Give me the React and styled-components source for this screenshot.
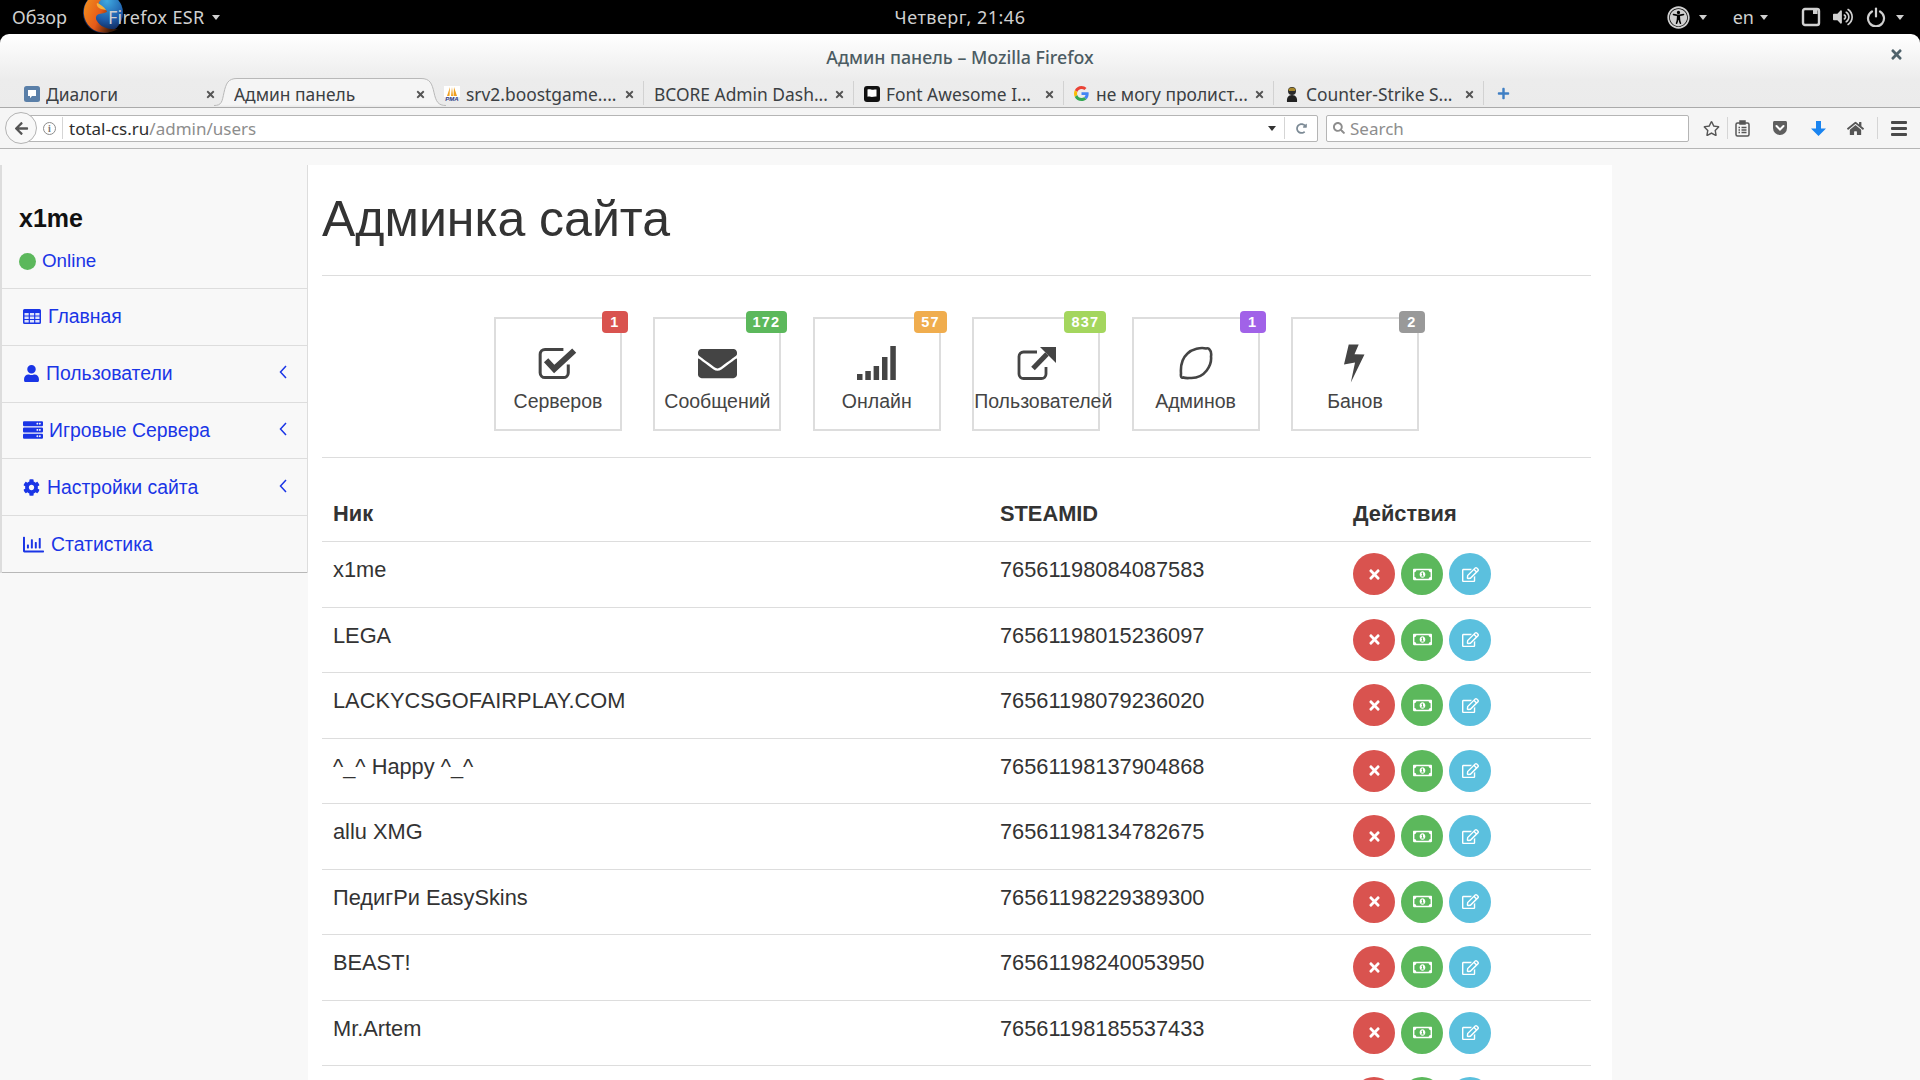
import React from 'react';
import styled, { createGlobalStyle } from 'styled-components';
import {
  FaCog, FaEnvelope, FaHome, FaRegChartBar, FaRegEdit,
  FaRegMoneyBillAlt, FaRegStar, FaServer, FaTimes, FaUniversalAccess, FaUser,
  FaVolumeUp, FaSearch, FaArrowLeft, FaRedoAlt, FaPlus,
} from 'react-icons/fa';

const uiFont = '"Noto Sans", "Open Sans", sans-serif';

const Global = createGlobalStyle`
  html, body {
    margin: 0;
    height: 1080px;
    overflow: hidden;
    background: #f8f8f8;
    font-family: "Liberation Sans", Arial, sans-serif;
  }
`;

const Page = styled.div`
  width: 1920px;
  height: 1080px;
  overflow: hidden;
  background: #000;
`;

/* gnome panel */
const TopBar = styled.div`
  height: 34px;
  display: grid;
  grid-template-columns: 1fr auto 1fr;
  align-items: center;
  background: #000;
  color: #d0d0d0;
  font-family: ${uiFont};
  font-size: 18px;
`;

const TopLeft = styled.div`
  display: flex;
  align-items: center;
  height: 34px;
  padding-left: 12px;
`;

const AppName = styled.span`
  margin-left: -18px;
  letter-spacing: 0.3px;
`;

const Clock = styled.span`
  letter-spacing: 0.5px;
`;

const TopRight = styled.div`
  display: flex;
  align-items: center;
  justify-content: flex-end;
  padding-right: 16px;
`;

const Caret = styled.i`
  display: inline-block;
  width: 0;
  height: 0;
  margin-left: ${(p) => p.$left ?? 7}px;
  border-left: 4.5px solid transparent;
  border-right: 4.5px solid transparent;
  border-top: 5px solid ${(p) => p.$color || '#d0d0d0'};
`;

const TrayItem = styled.span`
  display: inline-flex;
  align-items: center;
  margin-left: ${(p) => p.$left || 0}px;
  color: #d0d0d0;
`;

/* firefox window */
const Chrome = styled.div`
  background: linear-gradient(#fff, #ececec 62%, #ebebeb);
  border-radius: 9px 9px 0 0;
`;

const TitleBar = styled.div`
  height: 45px;
  display: flex;
  align-items: center;
  justify-content: center;
  position: relative;
  color: #4c5c63;
  font-family: ${uiFont};
  font-size: 17.8px;
  font-weight: 500;
`;

const WindowClose = styled.span`
  position: absolute;
  right: 16px;
  top: 13px;
  color: #4f626b;
  display: flex;
`;

const TabStrip = styled.div`
  height: 28px;
  display: flex;
  padding-left: 14px;
  border-bottom: 1px solid #aaa;
`;

const Tab = styled.div`
  position: relative;
  width: 210px;
  box-sizing: border-box;
  display: flex;
  align-items: center;
  padding: 2px 8px 0 10px;
  color: #3b4043;
  font-family: ${uiFont};
  font-size: 17.4px;
  white-space: nowrap;
  border-right: ${(p) => (p.$divider ? '1px solid #d2d2d2' : '0')};
  height: 24px;
  margin-top: 2px;
`;

const TabShape = styled.svg`
  position: absolute;
  left: -10px;
  top: -3px;
`;

const TabIcon = styled.span`
  position: relative;
  display: flex;
  width: 16px;
  height: 16px;
  margin-right: 6px;
  flex: none;
`;

const TabLabel = styled.span`
  position: relative;
  flex: 1;
  overflow: hidden;
`;

const TabClose = styled.span`
  position: relative;
  display: flex;
  color: #555;
  margin-left: 6px;
`;

const NewTab = styled.span`
  display: flex;
  align-items: center;
  margin-left: 13px;
  color: #3f7fc4;
`;

const NavBar = styled.div`
  height: 41px;
  box-sizing: border-box;
  display: flex;
  align-items: center;
  padding-left: 5px;
  background: #f5f5f5;
  border-bottom: 1px solid #b5b5b5;
`;

const BackButton = styled.div`
  width: 30px;
  height: 30px;
  flex: none;
  display: flex;
  align-items: center;
  justify-content: center;
  position: relative;
  z-index: 1;
  margin-right: -15px;
  border: 1px solid #b3b3b3;
  border-radius: 50%;
  background: #f8f8f8;
  color: #555;
`;

const UrlBox = styled.div`
  width: ${(p) => p.$width}px;
  height: 27px;
  flex: none;
  box-sizing: border-box;
  display: flex;
  align-items: center;
  margin-right: ${(p) => p.$right || 0}px;
  padding-left: ${(p) => p.$pad}px;
  background: #fff;
  border: 1px solid #b5b5b5;
  border-radius: 2px;
  font-family: ${uiFont};
  font-size: 17px;
  color: #2d2d2d;
`;

const InfoDot = styled.span`
  width: 13px;
  height: 13px;
  box-sizing: border-box;
  flex: none;
  display: flex;
  align-items: center;
  justify-content: center;
  border: 1px solid #8c8c8c;
  border-radius: 50%;
  color: #777;
  font: 700 10px "Liberation Serif", serif;
`;

const VSep = styled.span`
  width: 1px;
  height: ${(p) => p.$height || 22}px;
  flex: none;
  margin: 0 ${(p) => p.$right || 0}px 0 ${(p) => p.$left || 0}px;
  background: #d5d5d5;
`;

const Muted = styled.span`
  color: #8d8d8d;
  margin-left: ${(p) => p.$left || 0}px;
`;

const UrlActions = styled.span`
  display: flex;
  align-items: center;
  margin-left: auto;
  padding-right: 10px;
`;

const ToolSlot = styled.span`
  width: ${(p) => p.$width}px;
  margin-left: ${(p) => p.$left || 0}px;
  flex: none;
  display: flex;
  justify-content: center;
  color: ${(p) => p.$color || '#555'};
`;

const Burger = styled.span`
  display: block;
  width: 16px;
  height: 3px;
  border-radius: 1px;
  background: #4a4a4a;
  box-shadow: 0 6px 0 #4a4a4a, 0 -6px 0 #4a4a4a;
`;

/* page content */
const Shell = styled.div`
  height: 932px;
  display: flex;
  align-items: flex-start;
  padding-top: 16px;
  box-sizing: border-box;
  background: #f8f8f8;
`;

const Sidebar = styled.nav`
  width: 308px;
  flex: none;
  box-sizing: border-box;
  background: #f8f8f8;
  border-left: 2px solid #ddd;
  border-right: 1px solid #ddd;
`;

const SideHead = styled.div`
  height: 124px;
  box-sizing: border-box;
  padding: 35px 0 0 17px;
  border-bottom: 1px solid #ddd;
`;

const UserName = styled.div`
  font-size: 25px;
  line-height: 36px;
  font-weight: 700;
  color: #111;
`;

const Status = styled.div`
  display: flex;
  align-items: center;
  gap: 6px;
  margin-top: 13px;
  font-size: 18.8px;
  line-height: 24px;
  color: #1a35e6;
`;

const Dot = styled.span`
  width: 17px;
  height: 17px;
  border-radius: 50%;
  background: #5cb85c;
`;

const SideItem = styled.a`
  height: 56.8px;
  box-sizing: border-box;
  display: flex;
  align-items: center;
  gap: ${(p) => p.$gap || 8}px;
  padding: 0 20px 0 21px;
  border-bottom: 1px solid ${(p) => (p.$last ? '#b8b8b8' : '#ddd')};
  font-size: 19.4px;
  color: #1a35e6;
`;

const ChevronMark = styled.svg`
  margin-left: auto;
  margin-top: -3px;
`;

const Panel = styled.main`
  width: 1304px;
  height: 916px;
  flex: none;
  box-sizing: border-box;
  overflow: hidden;
  padding: 0 21px 0 14px;
  background: #fff;
  color: #333;
`;

const Heading = styled.h1`
  height: 111px;
  box-sizing: border-box;
  margin: 0;
  padding-top: 24px;
  border-bottom: 1px solid #ddd;
  font-size: 50px;
  line-height: 60px;
  font-weight: 400;
  color: #333;
`;

const Stats = styled.div`
  display: flex;
  gap: 31.4px;
  padding: 41px 0 26px 172px;
  border-bottom: 1px solid #ddd;
`;

const StatCard = styled.div`
  position: relative;
  width: 128px;
  height: 114px;
  box-sizing: border-box;
  padding-top: 25px;
  border: 2px solid #ddd;
  color: #444;
  font-size: 19.5px;
  text-align: center;
`;

const StatIcon = styled.div`
  height: 38px;
  display: flex;
  align-items: center;
  justify-content: center;
`;

const StatLabel = styled.div`
  margin-top: 6px;
  line-height: 26px;
  white-space: nowrap;
`;

const Badge = styled.span`
  position: absolute;
  top: -8px;
  right: -8px;
  height: 22px;
  min-width: 26px;
  box-sizing: border-box;
  padding: 0 7px;
  border-radius: 4px;
  background: ${(p) => p.$color};
  color: #fff;
  font-size: 14.5px;
  font-weight: 700;
  line-height: 22px;
  letter-spacing: 1.2px;
`;

const Row = styled.div`
  display: grid;
  grid-template-columns: 668px 353px 1fr;
  height: ${(p) => (p.$head ? 84 : 65.55)}px;
  box-sizing: border-box;
  align-items: ${(p) => (p.$head ? 'end' : 'start')};
  border-bottom: 1px solid #ddd;
  font-size: 21.8px;
  line-height: 30px;
  font-weight: ${(p) => (p.$head ? 700 : 400)};
  color: #333;
`;

const Cell = styled.div`
  padding: ${(p) => (p.$head ? '0 10px 12px' : '13px 10px 0')};
  padding-left: ${(p) => (p.$nick ? 11 : 10)}px;
`;

const Actions = styled.div`
  display: flex;
  gap: 6px;
  padding: 11px 0 0 10px;
`;

const RoundButton = styled.span`
  width: 42px;
  height: 42px;
  display: flex;
  align-items: center;
  justify-content: center;
  border-radius: 50%;
  background: ${(p) => p.$color};
  color: #fff;
`;

const PmaWord = styled.span`
  position: absolute;
  left: 0;
  right: 0;
  bottom: 0;
  font: italic 700 6px/6px "Liberation Sans", sans-serif;
  text-align: center;
  color: #2c3a86;
`;

const FirefoxLogo = () => (
  <svg width="46" height="34" viewBox="0 0 46 34" style={{ marginLeft: 13 }}>
    <defs>
      <radialGradient id="fxGlobe" cx="0.6" cy="0.2" r="0.8">
        <stop offset="0" stopColor="#3fa9e0" />
        <stop offset="0.6" stopColor="#1d5aa8" />
        <stop offset="1" stopColor="#10204a" />
      </radialGradient>
      <linearGradient id="fxFox" x1="0" y1="0" x2="1" y2="0.4">
        <stop offset="0" stopColor="#f1901c" />
        <stop offset="0.55" stopColor="#e65a1a" />
        <stop offset="1" stopColor="#3a1a08" />
      </linearGradient>
    </defs>
    <circle cx="23" cy="13" r="20" fill="url(#fxGlobe)" />
    <path d="M8 0C2 7 2 20 11 28c7 6 19 6 27 1 -9 1-18-2-21-8 -2-3-1-6 2-7 4-1 8-1 8-3 -3-3-6-3-8-6 -1-2 0-4 2-5H8z" fill="url(#fxFox)" />
    <path d="M17 3c3 1 7 4 9 7l-5-1c-3-1-5-4-4-6z" fill="#f7b23b" />
  </svg>
);

const WindowIcon = () => (
  <svg width="20" height="20" viewBox="0 0 20 20">
    <rect x="2" y="2" width="16" height="16" rx="2" fill="none" stroke="#d0d0d0" strokeWidth="2.4" />
    <path d="M12 2.500h4.500V7H12z" fill="#d0d0d0" />
  </svg>
);

const PowerIcon = () => (
  <svg width="20" height="20" viewBox="0 0 20 20" fill="none" stroke="#d0d0d0" strokeWidth="2.2" strokeLinecap="round">
    <path d="M6 4.500a8 8 0 1 0 8 0" />
    <path d="M10 1.500v8" />
  </svg>
);

const VkIcon = () => (
  <svg width="16" height="16" viewBox="0 0 16 16">
    <rect width="16" height="16" rx="2.500" fill="#5a7fa8" />
    <path d="M4 4h8v6H8l-2 2.200V10H4z" fill="#fff" />
  </svg>
);

const PmaIcon = () => (
  <>
    <svg width="16" height="11" viewBox="0 0 16 11">
      <rect width="16" height="11" fill="#fff" />
      <path d="M3 10L6 1l-.5 9zM7 10l1-9 1 9zM9.500 10L10 1l3 9z" fill="#f0a020" />
    </svg>
    <PmaWord>PMA</PmaWord>
  </>
);

const AwesomeIcon = () => (
  <svg width="16" height="16" viewBox="0 0 16 16">
    <rect width="16" height="16" rx="3" fill="#111" />
    <path d="M3.500 3.500c2.500-1 4 .7 6 .3 1-.2 2-.4 3-.3v7c-2.500-.3-4 .8-6 .3-1.200-.3-2-.4-3 0z" fill="#fff" />
  </svg>
);

const GoogleIcon = () => (
  <svg width="15" height="15" viewBox="0 0 48 48">
    <path fill="#EA4335" d="M24 9.500c3.500 0 6.700 1.200 9.200 3.600l6.800-6.800C35.900 2.400 30.500 0 24 0 14.600 0 6.500 5.400 2.600 13.200l8 6.200C12.400 13.700 17.700 9.500 24 9.500z" />
    <path fill="#4285F4" d="M46.900 24.500c0-1.600-.2-3.100-.4-4.500H24v9h12.900c-.6 3-2.200 5.500-4.800 7.200l7.700 6c4.500-4.200 7.100-10.300 7.100-17.700z" />
    <path fill="#FBBC05" d="M10.500 28.600c-.5-1.500-.8-3-.8-4.600s.3-3.100.8-4.600l-8-6.200C.9 16.500 0 20.100 0 24s.9 7.500 2.600 10.800l7.900-6.200z" />
    <path fill="#34A853" d="M24 48c6.500 0 11.900-2.100 15.900-5.800l-7.700-6c-2.200 1.400-4.900 2.300-8.200 2.300-6.300 0-11.600-4.200-13.500-9.900l-8 6.200C6.500 42.600 14.600 48 24 48z" />
  </svg>
);

const CsIcon = () => (
  <svg width="16" height="16" viewBox="0 0 16 16">
    <path d="M3 16c-.5-4 1-7 5-7s5.500 3 5 7z" fill="#222" />
    <circle cx="8" cy="5" r="4" fill="#2b2b2b" />
    <path d="M4.500 3.500C5 1 11 1 11.500 3.500L11 5H5z" fill="#a5862c" />
  </svg>
);

const ClipboardIcon = () => (
  <svg width="15" height="17" viewBox="0 0 15 17" fill="none" stroke="#555" strokeWidth="1.500">
    <rect x="1" y="3" width="13" height="13" rx="1.500" />
    <path d="M5 1h5v3H5z" fill="#555" />
    <path d="M3.500 7.500h1.500M3.500 10h1.500M3.500 12.500h1.500M6.500 7.500h5M6.500 10h5M6.500 12.500h5" />
  </svg>
);

const PocketIcon = () => (
  <svg width="16" height="16" viewBox="0 0 16 16">
    <path d="M1 2.500C1 1.700 1.600 1 2.500 1h11c.9 0 1.500.7 1.500 1.500V8a7 7 0 0 1-14 0z" fill="#5e5e5e" />
    <path d="M4.500 6L8 9.500 11.500 6" fill="none" stroke="#fff" strokeWidth="2" strokeLinecap="round" />
  </svg>
);

const DownloadIcon = () => (
  <svg width="15" height="15" viewBox="0 0 15 15">
    <path d="M5 0h5v7.500h5L7.500 15 0 7.500h5z" fill="#1a84f0" />
  </svg>
);

const TabCurve = () => (
  <TabShape width="232" height="28" viewBox="0 0 232 28">
    <path d="M0 27.500c8 0 8-4 10-13S14 .5 23 .5h184c9 0 11 5 13 14s4 13 12 13" fill="#f5f5f5" stroke="#b8b8b8" />
  </TabShape>
);

const TableIcon = () => (
  <svg width="18" height="15" viewBox="0 0 18 15">
    <path d="M1.500 0h15A1.500 1.500 0 0 1 18 1.500v12a1.500 1.500 0 0 1-1.500 1.500h-15A1.500 1.500 0 0 1 0 13.500v-12A1.500 1.500 0 0 1 1.500 0z" fill="#1a35e6" />
    <path d="M1.500 4h4.200v2.500H1.500zM6.900 4h4.200v2.500H6.900zM12.300 4h4.200v2.500h-4.200zM1.500 7.500h4.200V10H1.500zM6.900 7.500h4.200V10H6.900zM12.300 7.500h4.200V10h-4.200zM1.500 11h4.200v2.500H1.500zM6.900 11h4.200v2.500H6.900zM12.300 11h4.200v2.500h-4.200z" fill="#dfe3fb" />
  </svg>
);

const Chevron = () => (
  <ChevronMark width="8" height="14" viewBox="0 0 8 14" fill="none" stroke="#1a35e6" strokeWidth="1.500">
    <path d="M7 1L1.500 7 7 13" />
  </ChevronMark>
);

const CheckIcon = () => (
  <svg width="40" height="34" viewBox="0 0 37 31" fill="none" stroke="#444">
    <path d="M28 17v7.500a4.500 4.500 0 0 1-4.500 4.500h-17A4.500 4.500 0 0 1 2 24.500v-17A4.500 4.500 0 0 1 6.500 3h17" strokeWidth="2.800" />
    <path d="M7.500 13l7.500 8L33.500 4" strokeWidth="5.500" />
  </svg>
);

const SignalIcon = () => (
  <svg width="39" height="34" viewBox="0 0 39 34" fill="#444">
    <rect x="0" y="28" width="5.500" height="6" />
    <rect x="8.300" y="25" width="5.500" height="9" />
    <rect x="16.600" y="20" width="5.500" height="14" />
    <rect x="25" y="11" width="5.500" height="23" />
    <rect x="33.300" y="0" width="5.500" height="34" />
  </svg>
);

const ExternalIcon = () => (
  <svg width="39" height="33" viewBox="0 0 39 33">
    <path d="M29 20v7a4.500 4.500 0 0 1-4.500 4.500h-18A4.500 4.500 0 0 1 2 27V9.500A4.500 4.500 0 0 1 6.500 5H20" fill="none" stroke="#444" strokeWidth="2.800" />
    <path d="M16 21.500L30 7" fill="none" stroke="#444" strokeWidth="5" />
    <path d="M23 0h16v16z" fill="#444" />
  </svg>
);

const LemonIcon = () => (
  <svg width="34" height="34" viewBox="0 0 34 34">
    <path d="M30.500 3.500C32 5 32.500 7.500 32 10.500C33 19 26 32 12.500 32C9.500 32 6.500 32.500 4.500 31.500C2.500 32.500 1.500 30.500 2 27.500C1.500 21 3 12.500 8.500 7.500C13 3 22 1 27 2.500C28.500 2 30 2.500 30.500 3.500Z" fill="none" stroke="#444" strokeWidth="2.600" />
  </svg>
);

const BoltIcon = () => (
  <svg width="21" height="39" viewBox="0 0 20 36">
    <path d="M4.500 0H14l-4 9.200 9.500.3L6.500 36l4-19L0 19z" fill="#444" />
  </svg>
);

const tabs = [
  { icon: <VkIcon />, label: 'Диалоги' },
  { label: 'Админ панель', active: true },
  { icon: <PmaIcon />, label: 'srv2.boostgame....', divider: true },
  { label: 'BCORE Admin Dash...', divider: true },
  { icon: <AwesomeIcon />, label: 'Font Awesome I...', divider: true },
  { icon: <GoogleIcon />, label: 'не могу пролист...', divider: true },
  { icon: <CsIcon />, label: 'Counter-Strike S...', divider: true },
];

const stats = [
  { label: 'Серверов', count: 1, color: '#d9534f', icon: <CheckIcon /> },
  { label: 'Сообщений', count: 172, color: '#5cb85c', icon: <FaEnvelope size={39} color="#444" /> },
  { label: 'Онлайн', count: 57, color: '#f0ad4e', icon: <SignalIcon /> },
  { label: 'Пользователей', count: 837, color: '#a4d65e', icon: <ExternalIcon /> },
  { label: 'Админов', count: 1, color: '#a162e8', icon: <LemonIcon /> },
  { label: 'Банов', count: 2, color: '#999', icon: <BoltIcon /> },
];

const users = [
  ['x1me', '76561198084087583'],
  ['LEGA', '76561198015236097'],
  ['LACKYCSGOFAIRPLAY.COM', '76561198079236020'],
  ['^_^ Happy ^_^', '76561198137904868'],
  ['allu XMG', '76561198134782675'],
  ['ПедигРи EasySkins', '76561198229389300'],
  ['BEAST!', '76561198240053950'],
  ['Mr.Artem', '76561198185537433'],
  ['', ''],
];

export default function App() {
  return (
    <Page>
      <Global />
      <TopBar>
        <TopLeft>
          <span>Обзор</span>
          <FirefoxLogo />
          <AppName>Firefox ESR</AppName>
          <Caret $left={8} />
        </TopLeft>
        <Clock>Четверг, 21:46</Clock>
        <TopRight>
          <FaUniversalAccess size={23} />
          <Caret $left={9} />
          <TrayItem $left={26}>en<Caret $left={6} /></TrayItem>
          <TrayItem $left={33}><WindowIcon /></TrayItem>
          <TrayItem $left={12}><FaVolumeUp size={20} /></TrayItem>
          <TrayItem $left={13}><PowerIcon /></TrayItem>
          <Caret $left={10} />
        </TopRight>
      </TopBar>

      <Chrome>
        <TitleBar>
          Админ панель – Mozilla Firefox
          <WindowClose><FaTimes size={15} /></WindowClose>
        </TitleBar>
        <TabStrip>
          {tabs.map((t) => (
            <Tab key={t.label} $divider={t.divider}>
              {t.active && <TabCurve />}
              {t.icon && <TabIcon>{t.icon}</TabIcon>}
              <TabLabel>{t.label}</TabLabel>
              <TabClose><FaTimes size={11} /></TabClose>
            </Tab>
          ))}
          <NewTab><FaPlus size={13} /></NewTab>
        </TabStrip>
      </Chrome>

      <NavBar>
        <BackButton><FaArrowLeft size={15} /></BackButton>
        <UrlBox $width={1296} $right={8} $pad={20}>
          <InfoDot>i</InfoDot>
          <VSep $left={6} $right={6} />
          total-cs.ru<Muted>/admin/users</Muted>
          <UrlActions>
            <Caret $color="#333" $left={0} />
            <VSep $left={8} $right={11} />
            <FaRedoAlt size={11} color="#7d8b96" />
          </UrlActions>
        </UrlBox>
        <UrlBox $width={363} $pad={6}>
          <FaSearch size={12} color="#8d8d8d" />
          <Muted $left={5}>Search</Muted>
        </UrlBox>
        <ToolSlot $left={6} $width={32}><FaRegStar size={17} /></ToolSlot>
        <VSep />
        <ToolSlot $width={29}><ClipboardIcon /></ToolSlot>
        <ToolSlot $width={46}><PocketIcon /></ToolSlot>
        <ToolSlot $width={30}><DownloadIcon /></ToolSlot>
        <ToolSlot $width={44}><FaHome size={17} /></ToolSlot>
        <VSep />
        <ToolSlot $width={42}><Burger /></ToolSlot>
      </NavBar>

      <Shell>
        <Sidebar>
          <SideHead>
            <UserName>x1me</UserName>
            <Status><Dot />Online</Status>
          </SideHead>
          <SideItem $gap={7}><TableIcon />Главная</SideItem>
          <SideItem $gap={6}><FaUser size={17} />Пользователи<Chevron /></SideItem>
          <SideItem $gap={6}><FaServer size={20} />Игровые Сервера<Chevron /></SideItem>
          <SideItem $gap={7}><FaCog size={17} />Настройки сайта<Chevron /></SideItem>
          <SideItem $gap={7} $last><FaRegChartBar size={21} />Статистика</SideItem>
        </Sidebar>

        <Panel>
          <Heading>Админка сайта</Heading>
          <Stats>
            {stats.map((s) => (
              <StatCard key={s.label}>
                <Badge $color={s.color}>{s.count}</Badge>
                <StatIcon>{s.icon}</StatIcon>
                <StatLabel>{s.label}</StatLabel>
              </StatCard>
            ))}
          </Stats>
          <Row $head>
            <Cell $head $nick>Ник</Cell>
            <Cell $head>STEAMID</Cell>
            <Cell $head>Действия</Cell>
          </Row>
          {users.map(([nick, steamId], i) => (
            <Row key={i}>
              <Cell $nick>{nick}</Cell>
              <Cell>{steamId}</Cell>
              <Actions>
                <RoundButton $color="#d9534f"><FaTimes size={15} /></RoundButton>
                <RoundButton $color="#5cb85c"><FaRegMoneyBillAlt size={19} /></RoundButton>
                <RoundButton $color="#5bc0de"><FaRegEdit size={17} /></RoundButton>
              </Actions>
            </Row>
          ))}
        </Panel>
      </Shell>
    </Page>
  );
}
